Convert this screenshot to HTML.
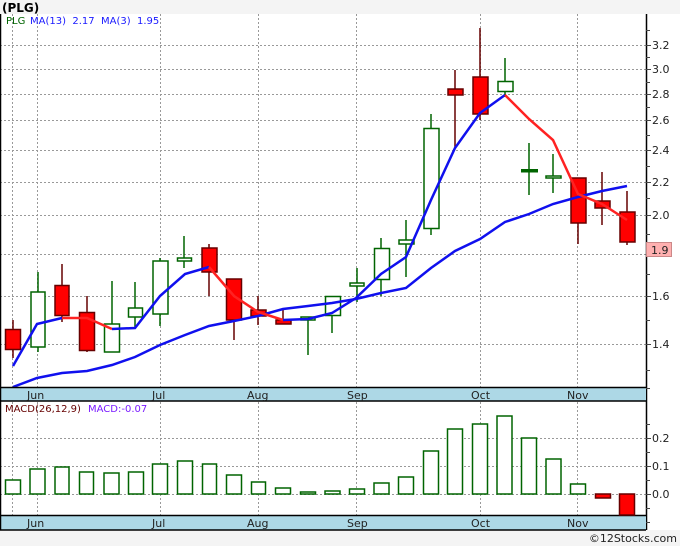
<!DOCTYPE html>
<html><head><meta charset="utf-8"><style>
html,body{margin:0;padding:0;background:#f4f4f4;}
svg{display:block;font-family:"DejaVu Sans","Liberation Sans",sans-serif;}
</style></head><body>
<svg width="680" height="546" viewBox="0 0 680 546" xmlns="http://www.w3.org/2000/svg">
<rect x="0" y="0" width="680" height="546" fill="#f4f4f4"/>
<text x="2" y="12" font-size="12" font-weight="bold" fill="#000">(PLG)</text>
<rect x="0" y="14" width="646" height="374" fill="#fff"/>
<rect x="646" y="14" width="34" height="516" fill="#fff"/>
<rect x="0" y="401" width="646" height="115" fill="#fff"/>
<g stroke="#999" stroke-width="1" stroke-dasharray="2,2">
<line x1="0" x2="646" y1="45.5" y2="45.5"/><line x1="0" x2="646" y1="69.5" y2="69.5"/><line x1="0" x2="646" y1="94.5" y2="94.5"/><line x1="0" x2="646" y1="120.5" y2="120.5"/><line x1="0" x2="646" y1="150.5" y2="150.5"/><line x1="0" x2="646" y1="182.5" y2="182.5"/><line x1="0" x2="646" y1="215.5" y2="215.5"/><line x1="0" x2="646" y1="254.5" y2="254.5"/><line x1="0" x2="646" y1="296.5" y2="296.5"/><line x1="0" x2="646" y1="344.5" y2="344.5"/>
<line x1="0" x2="646" y1="438.5" y2="438.5"/><line x1="0" x2="646" y1="466.5" y2="466.5"/><line x1="0" x2="646" y1="494.5" y2="494.5"/>
<line x1="12.5" x2="12.5" y1="14" y2="530"/><line x1="37.5" x2="37.5" y1="14" y2="530"/><line x1="160.5" x2="160.5" y1="14" y2="530"/><line x1="258.5" x2="258.5" y1="14" y2="530"/><line x1="356.5" x2="356.5" y1="14" y2="530"/><line x1="480.5" x2="480.5" y1="14" y2="530"/><line x1="577.5" x2="577.5" y1="14" y2="530"/>
</g>
<text x="6" y="24" font-size="10" fill="#006400">PLG</text>
<text x="30" y="24" font-size="10" fill="#1a1aff">MA(13)&#160; 2.17&#160; MA(3)&#160; 1.95</text>
<g stroke-width="1.5">
<g stroke="#600" fill="#f00">
<line x1="13" x2="13" y1="320" y2="358"/><rect x="5.5" y="329.5" width="15" height="20"/>
<line x1="62" x2="62" y1="264" y2="322"/><rect x="55" y="285.5" width="14" height="30"/>
<line x1="87" x2="87" y1="296" y2="352"/><rect x="79.5" y="312.5" width="15" height="38"/>
<line x1="209" x2="209" y1="244" y2="296"/><rect x="202" y="248" width="15" height="24"/>
<line x1="234" x2="234" y1="279" y2="340"/><rect x="226.5" y="279" width="15" height="41"/>
<line x1="258" x2="258" y1="296" y2="325"/><rect x="251" y="310" width="15" height="6"/>
<line x1="283" x2="283" y1="310" y2="324"/><rect x="276" y="320" width="15" height="4"/>
<line x1="455" x2="455" y1="70" y2="148"/><rect x="448" y="89" width="15" height="6"/>
<line x1="480" x2="480" y1="28" y2="120"/><rect x="473" y="77" width="15" height="37"/>
<line x1="578" x2="578" y1="178" y2="244"/><rect x="571" y="178" width="15" height="45"/>
<line x1="602" x2="602" y1="172" y2="225"/><rect x="595" y="201" width="15" height="7"/>
<line x1="627" x2="627" y1="191" y2="245"/><rect x="620" y="212" width="15" height="30"/>
</g>
<g stroke="#006400" fill="#fff">
<line x1="38" x2="38" y1="272" y2="352"/><rect x="31" y="292" width="14" height="55"/>
<line x1="112" x2="112" y1="281" y2="352"/><rect x="104.5" y="324" width="15" height="28"/>
<line x1="135" x2="135" y1="282" y2="328"/><rect x="128.5" y="308" width="14" height="9"/>
<line x1="160" x2="160" y1="258" y2="326"/><rect x="153" y="261" width="15" height="53"/>
<line x1="184" x2="184" y1="236" y2="268"/><rect x="177.5" y="258" width="14" height="3"/>
<line x1="308" x2="308" y1="318" y2="355"/><rect x="301" y="317" width="14" height="3"/>
<line x1="332" x2="332" y1="296" y2="333"/><rect x="325.5" y="296.5" width="15" height="19"/>
<line x1="357" x2="357" y1="268" y2="302"/><rect x="350" y="283" width="14" height="3"/>
<line x1="381" x2="381" y1="238" y2="296"/><rect x="374.5" y="248.5" width="15" height="31"/>
<line x1="406" x2="406" y1="220" y2="277"/><rect x="399" y="240" width="15" height="4"/>
<line x1="431" x2="431" y1="114" y2="235"/><rect x="424" y="128.5" width="15" height="100"/>
<line x1="505" x2="505" y1="58" y2="97"/><rect x="498" y="81.5" width="15" height="10"/>
<line x1="529" x2="529" y1="143" y2="195"/><rect x="522" y="170" width="15" height="1.5" stroke-width="2"/>
<line x1="553" x2="553" y1="154" y2="193"/><rect x="546" y="176" width="15" height="2"/>
</g>
</g>
<polyline fill="none" stroke="#1010ee" stroke-width="2.5" points="13,387 37,378 62,373 87,371 112,365 135,357 160,345 185,335 209,326 234,321 258,316 283,309 308,306 332,303 356,299 381,293 406,288 431,268 455,251 480,239 505,222 529,214 553,204 578,197 602,191 627,186"/>
<g fill="none" stroke-width="2.5">
<polyline stroke="#1010ee" points="13,366 37,324 62,318"/>
<polyline stroke="#f22" points="62,318 87,318 112,329"/>
<polyline stroke="#1010ee" points="112,329 135,328 160,296 185,274 209,267"/>
<polyline stroke="#f22" points="209,267 234,296 258,312 283,320"/>
<polyline stroke="#1010ee" points="283,320 308,319 332,313 356,298 381,274 406,257 431,200 455,148 480,113 505,95"/>
<polyline stroke="#f22" points="505,95 529,119 553,140 578,194 602,204 627,220"/>
</g>
<line x1="646.5" x2="646.5" y1="14" y2="530" stroke="#000" stroke-width="1.5"/>
<g stroke="#444" stroke-width="1">
<line x1="646" x2="651" y1="45.5" y2="45.5"/><line x1="646" x2="651" y1="69.5" y2="69.5"/><line x1="646" x2="651" y1="94.5" y2="94.5"/><line x1="646" x2="651" y1="120.5" y2="120.5"/><line x1="646" x2="651" y1="150.5" y2="150.5"/><line x1="646" x2="651" y1="182.5" y2="182.5"/><line x1="646" x2="651" y1="215.5" y2="215.5"/><line x1="646" x2="651" y1="296.5" y2="296.5"/><line x1="646" x2="651" y1="344.5" y2="344.5"/>
<line x1="646" x2="651" y1="438.5" y2="438.5"/><line x1="646" x2="651" y1="466.5" y2="466.5"/><line x1="646" x2="651" y1="494.5" y2="494.5"/>
<line x1="646" x2="650" y1="30.5" y2="30.5"/><line x1="646" x2="650" y1="57.5" y2="57.5"/><line x1="646" x2="650" y1="82.5" y2="82.5"/><line x1="646" x2="650" y1="107.5" y2="107.5"/><line x1="646" x2="650" y1="135.5" y2="135.5"/><line x1="646" x2="650" y1="166.5" y2="166.5"/><line x1="646" x2="650" y1="198.5" y2="198.5"/><line x1="646" x2="650" y1="234.5" y2="234.5"/><line x1="646" x2="650" y1="274.5" y2="274.5"/><line x1="646" x2="650" y1="320.5" y2="320.5"/><line x1="646" x2="650" y1="370.5" y2="370.5"/>
<line x1="646" x2="650" y1="388.5" y2="388.5"/><line x1="646" x2="650" y1="424.5" y2="424.5"/><line x1="646" x2="650" y1="452.5" y2="452.5"/><line x1="646" x2="650" y1="480.5" y2="480.5"/><line x1="646" x2="650" y1="508.5" y2="508.5"/><line x1="646" x2="650" y1="522.5" y2="522.5"/>
</g>
<g font-size="11" fill="#222">
<text x="652" y="49">3.2</text><text x="652" y="73">3.0</text><text x="652" y="98">2.8</text><text x="652" y="124">2.6</text><text x="652" y="154">2.4</text><text x="652" y="186">2.2</text><text x="652" y="219">2.0</text><text x="652" y="300">1.6</text><text x="652" y="348">1.4</text>
<text x="652" y="442">0.2</text><text x="652" y="470">0.1</text><text x="652" y="498">0.0</text>
</g>
<rect x="646.5" y="242.5" width="25" height="14" fill="#ffb0b0" stroke="#c88"/>
<text x="651" y="254" font-size="11" fill="#222">1.9</text>
<rect x="0" y="388" width="646" height="13" fill="#add8e6"/>
<rect x="0" y="516" width="646" height="14" fill="#add8e6"/>
<g stroke="#000" stroke-width="1.5"><line x1="0" x2="646" y1="387.5" y2="387.5"/><line x1="0" x2="646" y1="401" y2="401"/><line x1="0" x2="646" y1="515.5" y2="515.5"/><line x1="0" x2="646" y1="530" y2="530"/><line x1="0.5" x2="0.5" y1="14" y2="530"/></g>
<g font-size="11" fill="#222">
<text x="27" y="399">Jun</text><text x="152" y="399">Jul</text><text x="247" y="399">Aug</text><text x="347" y="399">Sep</text><text x="471" y="399">Oct</text><text x="567" y="399">Nov</text>
<text x="27" y="527">Jun</text><text x="152" y="527">Jul</text><text x="247" y="527">Aug</text><text x="347" y="527">Sep</text><text x="471" y="527">Oct</text><text x="567" y="527">Nov</text>
</g>
<text x="5" y="412" font-size="10" fill="#600">MACD(26,12,9)</text>
<text x="88" y="412" font-size="10" fill="#7a1aff">MACD:-0.07</text>
<g stroke="#006400" stroke-width="1.5" fill="#fff">
<rect x="5.5" y="480" width="15" height="14"/><rect x="30" y="469" width="15" height="25"/><rect x="55" y="467" width="14" height="27"/><rect x="79.5" y="472" width="14" height="22"/><rect x="104" y="473" width="15" height="21"/><rect x="128.5" y="472" width="15" height="22"/><rect x="152.5" y="464" width="15" height="30"/><rect x="177.5" y="461" width="15" height="33"/><rect x="202.5" y="464" width="14" height="30"/><rect x="226.5" y="475" width="15" height="19"/><rect x="251.5" y="482" width="14" height="12"/><rect x="275.5" y="488" width="15" height="6"/><rect x="300.5" y="492" width="15" height="2"/><rect x="325" y="491" width="15" height="3"/><rect x="349.5" y="489" width="15" height="5"/><rect x="374" y="483" width="15" height="11"/><rect x="398.5" y="477" width="15" height="17"/><rect x="423.5" y="451" width="15" height="43"/><rect x="447.5" y="429" width="15" height="65"/><rect x="472.5" y="424" width="15" height="70"/><rect x="497" y="416" width="15" height="78"/><rect x="521.5" y="438" width="15" height="56"/><rect x="546" y="459" width="15" height="35"/><rect x="570.5" y="484" width="15" height="10"/>
</g>
<g stroke="#600" stroke-width="1.5" fill="#f00">
<rect x="595.5" y="494" width="15" height="4"/><rect x="619.5" y="494" width="15" height="21"/>
</g>
<text x="677" y="542" font-size="11" fill="#222" text-anchor="end">©12Stocks.com</text>
</svg>
</body></html>
